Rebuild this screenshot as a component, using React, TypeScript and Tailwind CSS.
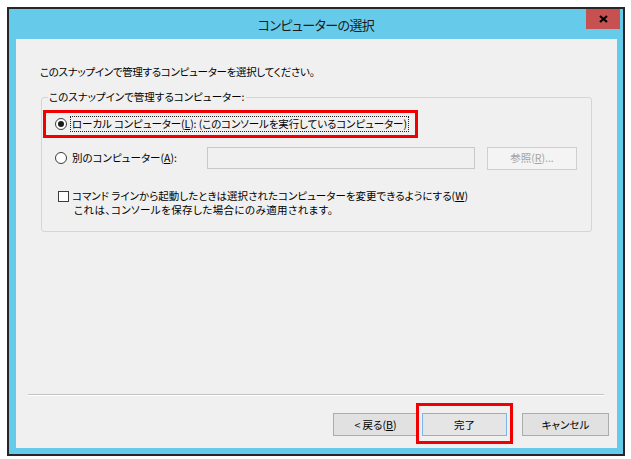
import React from "react";

const font = "font-['Noto_Sans_CJK_JP','Noto_Sans_CJK_SC',sans-serif] [font-feature-settings:'palt']";

function Radio({ checked }: { checked?: boolean }) {
  return (
    <span className="flex h-[12px] w-[12px] shrink-0 items-center justify-center rounded-full border border-[#3c3c3c] bg-white">
      {checked && <span className="h-[6px] w-[6px] rounded-full bg-[#1a1a1a]" />}
    </span>
  );
}

function Btn({
  children,
  width,
  primary,
}: {
  children: React.ReactNode;
  width: string;
  primary?: boolean;
}) {
  return (
    <button
      className={`flex h-[23px] items-center justify-center border text-[10.5px] text-black ${width} ${
        primary ? "border-[#7eb4ea] bg-[#e5e5e5]" : "border-[#acacac] bg-[#e1e1e1]"
      }`}
    >
      {children}
    </button>
  );
}

export default function App() {
  return (
    <div className={`min-h-screen bg-white pl-[7px] pt-[7px] ${font}`}>
      <div className="flex h-[449px] w-[618px] flex-col border-2 border-[#262626] bg-[#66cbea]">
        {/* title bar */}
        <div className="relative flex h-[30px] shrink-0 items-center justify-center">
          <span className="text-[13px] leading-none tracking-[-0.6px] text-[#1b1b1b]">コンピューターの選択</span>
          <button className="absolute right-[3px] top-0 flex h-[20px] w-[34px] items-center justify-center bg-[#c75050]">
            <svg width="9" height="8" viewBox="0 0 9 8">
              <path d="M1 1 L8 7 M8 1 L1 7" stroke="#000" strokeWidth="2.2" />
            </svg>
          </button>
        </div>

        {/* content */}
        <div className="mb-[6px] ml-[7px] mr-[6px] flex flex-1 flex-col bg-[#f0f0f0] text-[10.5px] text-black">
          <p className="pl-[24px] pt-[25px] leading-[16px] tracking-[-0.3px]">
            このスナップインで管理するコンピューターを選択してください。
          </p>

          <fieldset className="ml-[25px] mt-[9px] h-[143px] w-[551px] rounded-[3px] border border-[#d5d5d5] p-0">
            <legend className="ml-[6px] px-[1px] leading-[16px]">
              このスナップインで管理するコンピューター:
            </legend>

            {/* local computer */}
            <div className="relative ml-[13px] mt-[11px] flex h-[16px] items-center">
              <Radio checked />
              <span className="ml-[3px] border border-dotted border-[#222] px-[1px] leading-[14px] tracking-[-0.1px]">
                ローカル コンピューター(<span className="underline">L</span>): (このコンソールを実行しているコンピューター)
              </span>
              <span className="pointer-events-none absolute -top-[6px] left-[-12px] h-[28px] w-[375px] border-[3px] border-[#f00000]" />
            </div>

            {/* other computer */}
            <div className="ml-[13px] mt-[15px] flex h-[22px] items-center">
              <Radio />
              <span className="ml-[5px] w-[135px] leading-[16px]">
                別のコンピューター(<span className="underline">A</span>):
              </span>
              <div className="h-[22px] w-[268px] border border-[#c8c8c8] bg-[#f0f0f0]" />
              <button className="ml-[12px] flex h-[23px] w-[90px] items-center justify-center border border-[#cfcfcf] bg-[#f4f4f4] text-[10.5px] text-[#a3a3a3]">
                参照(<span className="underline">R</span>)...
              </button>
            </div>

            {/* checkbox */}
            <div className="ml-[16px] mt-[20px] flex items-start">
              <span className="mt-[2px] h-[11px] w-[11px] shrink-0 border border-[#3c3c3c] bg-white" />
              <div className="ml-[3px] flex flex-col">
                <span className="leading-[14px]">
                  コマンド ラインから起動したときは選択されたコンピューターを変更できるようにする(<span className="underline">W</span>)
                </span>
                <span className="pl-[2px] leading-[14px] tracking-[0.4px]">これは、コンソールを保存した場合にのみ適用されます。</span>
              </div>
            </div>
          </fieldset>

          {/* footer */}
          <div className="mt-auto pb-[12px]">
            <div className="ml-[12px] h-[2px] w-[576px] border-t border-[#c4c4c4] bg-white" />
            <div className="mt-[17px] flex justify-end gap-[4px] pr-[8px]">
              <Btn width="w-[85px]">
                &lt;&nbsp;戻る(<span className="underline">B</span>)
              </Btn>
              <div className="relative mr-[11px]">
                <Btn width="w-[85px]" primary>
                  完了
                </Btn>
                <span className="pointer-events-none absolute -left-[6px] -top-[10px] h-[41px] w-[97px] border-[3px] border-[#f00000]" />
              </div>
              <Btn width="w-[87px]">キャンセル</Btn>
            </div>
          </div>
        </div>
      </div>
    </div>
  );
}
